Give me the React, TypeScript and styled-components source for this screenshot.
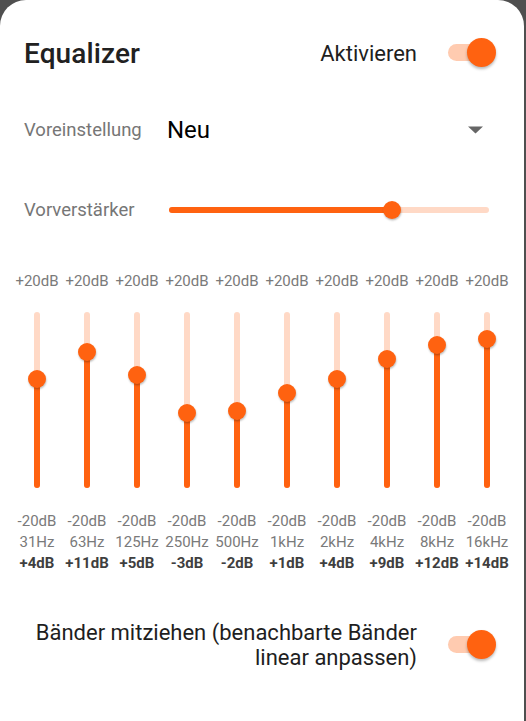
import React from 'react'
import styled, { createGlobalStyle } from 'styled-components'

const ORANGE = '#ff6210'
const ORANGE_LIGHT = '#ffd9c6'

const GlobalStyle = createGlobalStyle`
  html, body {
    margin: 0;
    padding: 0;
    background: #4f4f4f;
  }
  body {
    font-family: Roboto, "Liberation Sans", sans-serif;
  }
  * { box-sizing: border-box; }
`

const Card = styled.div`
  width: 524px;
  height: 721px;
  background: #ffffff;
  border-radius: 26px 26px 0 0;
  overflow: hidden;
`

const Header = styled.div`
  height: 106px;
  display: flex;
  align-items: center;
  padding: 0 28px 0 24px;
`

const Title = styled.h1`
  margin: 0;
  flex: 1;
  font-size: 28px;
  font-weight: 500;
  color: #212121;
  letter-spacing: 0.1px;
`

const ToggleLabel = styled.span`
  font-size: 22px;
  color: #1e1e1e;
  margin-right: 31px;
`

const SwitchBox = styled.div`
  position: relative;
  width: 48px;
  height: 30px;
  flex-shrink: 0;
`

const SwitchTrack = styled.div`
  position: absolute;
  left: 0;
  top: 6px;
  width: 40px;
  height: 17px;
  border-radius: 9px;
  background: #ffcbb0;
`

const SwitchKnob = styled.div`
  position: absolute;
  right: 0;
  top: 0;
  width: 29px;
  height: 29px;
  border-radius: 50%;
  background: ${ORANGE};
  box-shadow: 0 2px 3px rgba(0, 0, 0, 0.28);
`

const Row = styled.div<{ $mt?: number }>`
  height: 48px;
  margin-top: ${p => p.$mt ?? 0}px;
  display: flex;
  align-items: center;
  padding-left: 24px;
`

const RowLabel = styled.span<{ $w: number }>`
  width: ${p => p.$w}px;
  flex-shrink: 0;
  font-size: 18.5px;
  color: #767676;
`

const Select = styled.div`
  flex: 1;
  display: flex;
  align-items: center;
  justify-content: space-between;
  padding-right: 41px;
`

const SelectValue = styled.span`
  font-size: 24px;
  color: #000000;
`

const HSlider = styled.div`
  position: relative;
  width: 320px;
  height: 20px;
`

const HTrack = styled.div`
  position: absolute;
  left: 0;
  right: 0;
  top: 7px;
  height: 6px;
  border-radius: 3px;
  background: ${ORANGE_LIGHT};
`

const HFill = styled.div`
  position: absolute;
  left: 0;
  top: 7px;
  height: 6px;
  border-radius: 3px;
  background: ${ORANGE};
`

const Thumb = styled.div`
  position: absolute;
  width: 18px;
  height: 18px;
  border-radius: 50%;
  background: ${ORANGE};
  box-shadow: 0.5px 1.5px 2px rgba(0, 0, 0, 0.25);
`

const Bands = styled.div`
  margin-top: 37px;
  padding-left: 12px;
  display: grid;
  grid-template-columns: repeat(10, 50px);
`

const Band = styled.div`
  display: flex;
  flex-direction: column;
  align-items: center;
`

const BandText = styled.span<{ $bold?: boolean }>`
  font-size: 15px;
  line-height: 21px;
  white-space: nowrap;
  color: ${p => (p.$bold ? '#3f3f3f' : '#7a7a7a')};
  font-weight: ${p => (p.$bold ? 700 : 400)};
`

const TopText = styled(BandText)`
  line-height: 20px;
`

const VSlider = styled.div`
  position: relative;
  width: 50px;
  height: 194px;
  margin: 12px 0 14px;
`

const VTrack = styled.div`
  position: absolute;
  top: 9px;
  bottom: 9px;
  left: 22px;
  width: 6px;
  border-radius: 3px;
  background: ${ORANGE_LIGHT};
`

const VFill = styled.div`
  position: absolute;
  bottom: 9px;
  left: 22px;
  width: 6px;
  border-radius: 3px;
  background: ${ORANGE};
`

const Footer = styled.div`
  margin-top: 46px;
  display: flex;
  align-items: center;
  justify-content: flex-end;
  padding-right: 28px;
`

const FooterText = styled.div`
  font-size: 22px;
  line-height: 25px;
  color: #1e1e1e;
  text-align: right;
  margin-right: 31px;
`

function Switch() {
  return (
    <SwitchBox>
      <SwitchTrack />
      <SwitchKnob />
    </SwitchBox>
  )
}

const bands = [
  { hz: '31Hz', db: '+4dB', f: 0.618 },
  { hz: '63Hz', db: '+11dB', f: 0.774 },
  { hz: '125Hz', db: '+5dB', f: 0.642 },
  { hz: '250Hz', db: '-3dB', f: 0.424 },
  { hz: '500Hz', db: '-2dB', f: 0.439 },
  { hz: '1kHz', db: '+1dB', f: 0.538 },
  { hz: '2kHz', db: '+4dB', f: 0.618 },
  { hz: '4kHz', db: '+9dB', f: 0.733 },
  { hz: '8kHz', db: '+12dB', f: 0.811 },
  { hz: '16kHz', db: '+14dB', f: 0.848 },
]

const TRAVEL = 176
const preamp = 0.697

export default function App() {
  return (
    <>
      <GlobalStyle />
      <Card>
        <Header>
          <Title>Equalizer</Title>
          <ToggleLabel>Aktivieren</ToggleLabel>
          <Switch />
        </Header>

        <Row>
          <RowLabel $w={143}>Voreinstellung</RowLabel>
          <Select>
            <SelectValue>Neu</SelectValue>
            <svg width="15" height="8" viewBox="0 0 15 8">
              <path d="M0 0.5 L15 0.5 L7.5 7.5 Z" fill="#666666" />
            </svg>
          </Select>
        </Row>

        <Row $mt={32}>
          <RowLabel $w={145}>Vorverstärker</RowLabel>
          <HSlider>
            <HTrack />
            <HFill style={{ width: `${preamp * 100}%` }} />
            <Thumb style={{ left: `calc(${preamp * 100}% - 9px)`, top: 1 }} />
          </HSlider>
        </Row>

        <Bands>
          {bands.map(b => (
            <Band key={b.hz}>
              <TopText>+20dB</TopText>
              <VSlider>
                <VTrack />
                <VFill style={{ height: b.f * TRAVEL }} />
                <Thumb style={{ left: 16, top: (1 - b.f) * TRAVEL }} />
              </VSlider>
              <BandText>-20dB</BandText>
              <BandText>{b.hz}</BandText>
              <BandText $bold>{b.db}</BandText>
            </Band>
          ))}
        </Bands>

        <Footer>
          <FooterText>
            Bänder mitziehen (benachbarte Bänder
            <br />
            linear anpassen)
          </FooterText>
          <Switch />
        </Footer>
      </Card>
    </>
  )
}
